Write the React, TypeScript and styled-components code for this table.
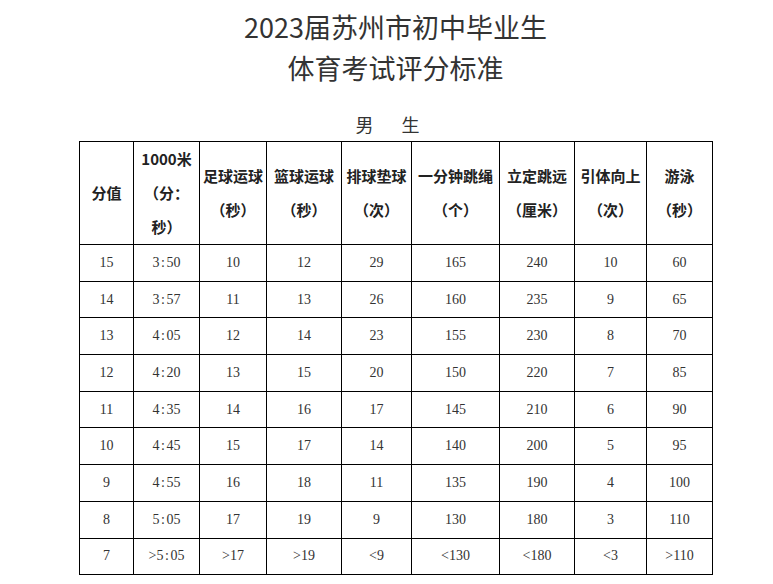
import styled, { createGlobalStyle } from 'styled-components';

const GlobalStyle = createGlobalStyle`
  html, body {
    margin: 0;
    padding: 0;
    background: #ffffff;
  }
`;

const Page = styled.div`
  width: 633px;
  margin-left: 79px;
  padding-top: 6px;
  font-family: 'Noto Sans CJK SC', 'Noto Sans', sans-serif;
`;

const Title = styled.h1`
  margin: 0;
  font-size: 27px;
  font-weight: 400;
  line-height: 41px;
  color: #333;
  text-align: center;
`;

const Subtitle = styled.h2`
  margin: 23px 0 0;
  padding-right: 16px;
  font-size: 18px;
  font-weight: 400;
  line-height: 26px;
  word-spacing: 24px;
  color: #333;
  text-align: center;
`;

const Table = styled.table`
  margin-top: 4px;
  width: 633px;
  border-collapse: collapse;
  table-layout: fixed;
`;

const HeadCell = styled.th`
  height: 101px;
  padding: 0;
  border: 1px solid #000;
  font-family: 'Noto Sans CJK SC', sans-serif;
  font-size: 15px;
  font-weight: 700;
  line-height: 34px;
  color: #222;
  text-align: center;
  vertical-align: middle;
`;

const Cell = styled.td`
  height: 35.7px;
  padding: 0;
  border: 1px solid #000;
  font-family: 'Liberation Serif', 'Noto Sans CJK SC', serif;
  font-size: 14px;
  color: #333;
  text-align: center;
  vertical-align: middle;
`;

const Colon = styled.span`
  padding: 0 1.5px;
`;

const widths = [54, 66, 67, 75, 70, 88, 75, 72, 66];

const headers: string[][] = [
  ['分值'],
  ['1000米', '（分：', '秒）'],
  ['足球运球', '（秒）'],
  ['篮球运球', '（秒）'],
  ['排球垫球', '（次）'],
  ['一分钟跳绳', '（个）'],
  ['立定跳远', '（厘米）'],
  ['引体向上', '（次）'],
  ['游泳', '（秒）'],
];

const rows: string[][] = [
  ['15', '3:50', '10', '12', '29', '165', '240', '10', '60'],
  ['14', '3:57', '11', '13', '26', '160', '235', '9', '65'],
  ['13', '4:05', '12', '14', '23', '155', '230', '8', '70'],
  ['12', '4:20', '13', '15', '20', '150', '220', '7', '85'],
  ['11', '4:35', '14', '16', '17', '145', '210', '6', '90'],
  ['10', '4:45', '15', '17', '14', '140', '200', '5', '95'],
  ['9', '4:55', '16', '18', '11', '135', '190', '4', '100'],
  ['8', '5:05', '17', '19', '9', '130', '180', '3', '110'],
  ['7', '>5:05', '>17', '>19', '<9', '<130', '<180', '<3', '>110'],
];

function renderValue(value: string) {
  if (!value.includes(':')) return value;
  const [a, b] = value.split(':');
  return (
    <>
      {a}
      <Colon>:</Colon>
      {b}
    </>
  );
}

export default function App() {
  return (
    <>
      <GlobalStyle />
      <Page>
        <Title>
          2023届苏州市初中毕业生
          <br />
          体育考试评分标准
        </Title>
        <Subtitle>男 生</Subtitle>
        <Table>
          <colgroup>
            {widths.map((w, i) => (
              <col key={i} style={{ width: w }} />
            ))}
          </colgroup>
          <thead>
            <tr>
              {headers.map((lines, i) => (
                <HeadCell key={i}>
                  {lines.map((line, j) => (
                    <div key={j}>{line}</div>
                  ))}
                </HeadCell>
              ))}
            </tr>
          </thead>
          <tbody>
            {rows.map((row, i) => (
              <tr key={i}>
                {row.map((value, j) => (
                  <Cell key={j}>{renderValue(value)}</Cell>
                ))}
              </tr>
            ))}
          </tbody>
        </Table>
      </Page>
    </>
  );
}
